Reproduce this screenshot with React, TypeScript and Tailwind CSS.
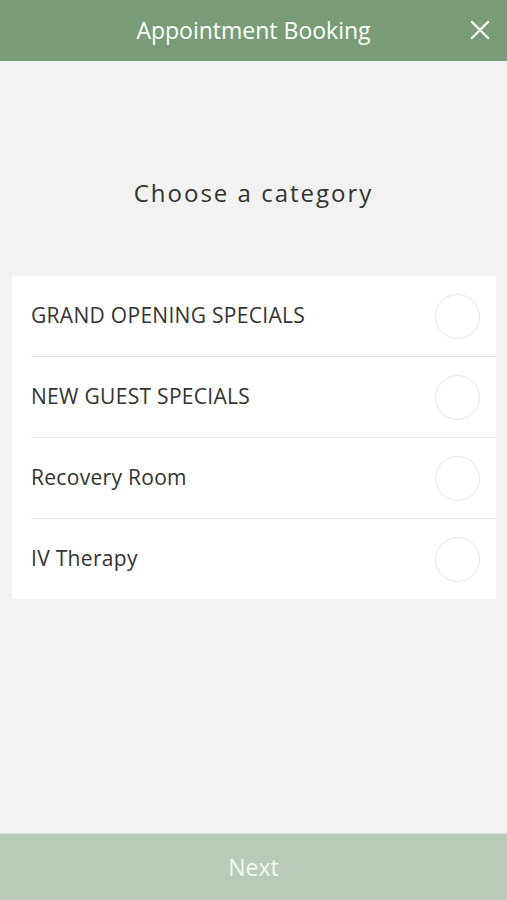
import { useState } from 'react';

const categories = ['GRAND OPENING SPECIALS', 'NEW GUEST SPECIALS', 'Recovery Room', 'IV Therapy'];

const App = () => {
  const [selected, setSelected] = useState<number | null>(null);

  return (
    <div className="flex flex-col h-[900px] bg-[#f2f2f2] font-['Open_Sans',sans-serif]">
      <header className="relative flex items-center justify-center h-[61px] bg-[#789b78] shrink-0">
        <h1 className="text-[23px] text-white">Appointment Booking</h1>
        <button className="absolute right-[16px] top-[19px] text-white">
          <svg width="22" height="22" viewBox="0 0 22 22" fill="none" stroke="currentColor" strokeWidth="2.4" strokeLinecap="round">
            <path d="M3 3L19 19M19 3L3 19" />
          </svg>
        </button>
      </header>

      <main className="flex-1">
        <h2 className="mt-[114px] mb-[65px] text-center text-[24px] tracking-[2px] text-[#333]">Choose a category</h2>

        <ul className="ml-[12px] mr-[11px] bg-white pl-[19px]">
          {categories.map((c, i) => (
            <li
              key={c}
              onClick={() => setSelected(i)}
              className={`flex items-center justify-between pr-[16px] cursor-pointer ${
                i < categories.length - 1 ? 'h-[81px] border-b border-[#e6e6e6]' : 'h-[80px]'
              }`}
            >
              <span className="text-[21px] tracking-[0.3px] text-[#333]">{c}</span>
              <span
                className={`w-[45px] h-[45px] rounded-full border-[1.5px] ${
                  selected === i ? 'border-[#789b78] bg-[#789b78]' : 'border-[#e6e6e6]'
                }`}
              />
            </li>
          ))}
        </ul>
      </main>

      <footer className="flex items-center justify-center h-[67px] bg-[#b9ccba] border-t border-[#d6e0d6] shrink-0">
        <span className="text-[23px] text-[#f2f8f0]">Next</span>
      </footer>
    </div>
  );
};

export default App;
